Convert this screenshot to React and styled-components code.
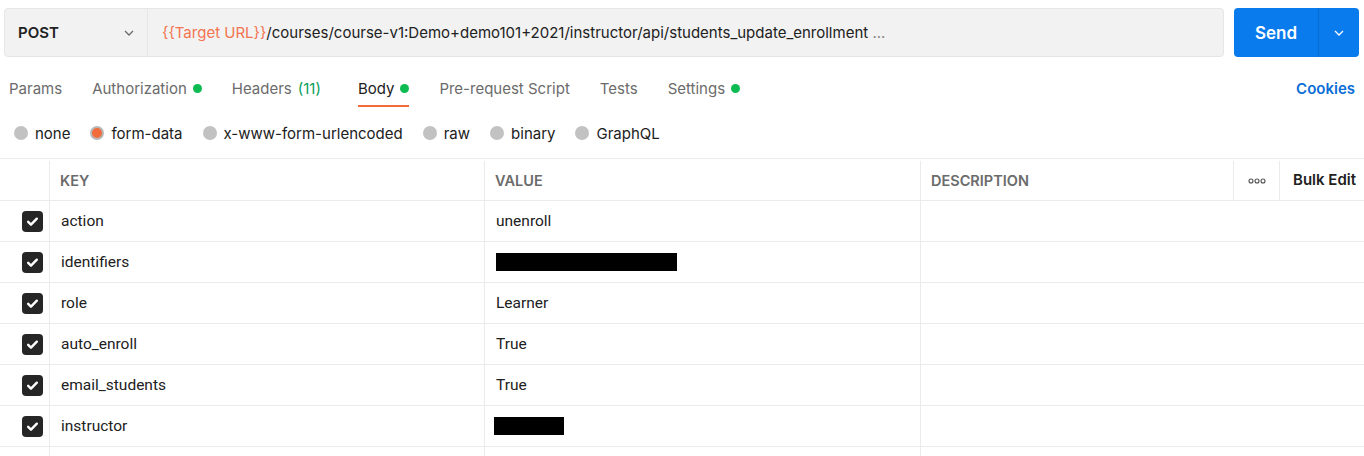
import styled, { createGlobalStyle } from "styled-components";

const GlobalStyle = createGlobalStyle`
  body {
    margin: 0;
    background: #ffffff;
    font-family: Inter, "Noto Sans", sans-serif;
    color: #212121;
    overflow: hidden;
  }
`;

const rows = [
  { key: "action", value: "unenroll" },
  { key: "identifiers", redact: 181 },
  { key: "role", value: "Learner" },
  { key: "auto_enroll", value: "True" },
  { key: "email_students", value: "True" },
  { key: "instructor", redact: 70, shift: -2 },
  { key: "", value: "" },
];

const tabs = [
  { label: "Params" },
  { label: "Authorization", dot: true },
  { label: "Headers", count: "(11)" },
  { label: "Body", dot: true, active: true },
  { label: "Pre-request Script" },
  { label: "Tests" },
  { label: "Settings", dot: true },
];

const bodyTypes = ["none", "form-data", "x-www-form-urlencoded", "raw", "binary", "GraphQL"];

function Chevron({ color = "#6b6b6b" }) {
  return (
    <svg width="12" height="12" viewBox="0 0 12 12" fill="none">
      <path d="M2 4l4 4 4-4" stroke={color} strokeWidth="1.3" />
    </svg>
  );
}

function Check() {
  return (
    <svg width="13" height="13" viewBox="0 0 12 12" fill="none">
      <path d="M2 6.3l2.6 2.6L10 3.4" stroke="#fff" strokeWidth="2.2" strokeLinecap="round" strokeLinejoin="round" />
    </svg>
  );
}

function Dots() {
  return (
    <svg width="18" height="6" viewBox="0 0 18 6" fill="none">
      <circle cx="3" cy="3" r="2" stroke="#505050" strokeWidth="1.1" />
      <circle cx="9" cy="3" r="2" stroke="#505050" strokeWidth="1.1" />
      <circle cx="15" cy="3" r="2" stroke="#505050" strokeWidth="1.1" />
    </svg>
  );
}

export default function App() {
  return (
    <Page>
      <GlobalStyle />
      <RequestBar>
        <UrlGroup>
          <Method>
            POST
            <Chevron />
          </Method>
          <Url>
            <Variable>{"{{Target URL}}"}</Variable>
            /courses/course-v1:Demo+demo101+2021/instructor/api/students_update_enrollment
            <Muted> ...</Muted>
          </Url>
        </UrlGroup>
        <SendButton>
          <SendLabel>Send</SendLabel>
          <SendMenu>
            <Chevron color="#ffffff" />
          </SendMenu>
        </SendButton>
      </RequestBar>

      <TabBar>
        <Tabs>
          {tabs.map((t) => (
            <Tab key={t.label} $active={t.active}>
              {t.label}
              {t.count && <Count>{t.count}</Count>}
              {t.dot && <Dot />}
            </Tab>
          ))}
        </Tabs>
        <Cookies>Cookies</Cookies>
      </TabBar>

      <RadioRow>
        {bodyTypes.map((b) => (
          <RadioItem key={b}>
            <Radio $on={b === "form-data"} />
            {b}
          </RadioItem>
        ))}
      </RadioRow>

      <Table>
        <HeadRow>
          <HeadCell $w="50px" />
          <HeadCell $w="435px">KEY</HeadCell>
          <HeadCell $w="436px">VALUE</HeadCell>
          <HeadCell $w="313px">DESCRIPTION</HeadCell>
          <HeadCell $w="46px" $center>
            <Dots />
          </HeadCell>
          <BulkEdit>Bulk Edit</BulkEdit>
        </HeadRow>
        {rows.map((r, i) => (
          <Row key={i}>
            <CheckCell>
              {r.key && (
                <Checkbox>
                  <Check />
                </Checkbox>
              )}
            </CheckCell>
            <Cell $w="435px">{r.key}</Cell>
            <Cell $w="436px">
              {r.redact ? <Redacted style={{ width: r.redact, marginLeft: r.shift || 0 }} /> : r.value}
            </Cell>
            <Cell $w="auto" $last />
          </Row>
        ))}
      </Table>
    </Page>
  );
}

const Page = styled.div`
  width: 1364px;
  height: 456px;
  overflow: hidden;
`;

const RequestBar = styled.div`
  display: flex;
  gap: 10px;
  padding: 8px 5px 0 4px;
  height: 49px;
`;

const UrlGroup = styled.div`
  flex: 1;
  display: flex;
  background: #f2f2f2;
  border: 1px solid #e6e6e6;
  border-radius: 4px;
  box-sizing: border-box;
`;

const Method = styled.div`
  width: 143px;
  box-sizing: border-box;
  padding: 0 12px 0 13px;
  display: flex;
  align-items: center;
  justify-content: space-between;
  border-right: 1px solid #e6e6e6;
  font-weight: 600;
  font-size: 15px;
  color: #212121;
`;

const Url = styled.div`
  display: flex;
  align-items: center;
  padding-left: 14px;
  font-size: 15px;
  color: #212121;
  white-space: pre;
`;

const Variable = styled.span`
  color: #f47450;
`;

const Muted = styled.span`
  color: #8a8a8a;
`;

const SendButton = styled.div`
  width: 125px;
  display: flex;
  background: #097bed;
  border-radius: 4px;
  color: #ffffff;
`;

const SendLabel = styled.div`
  width: 84px;
  display: flex;
  align-items: center;
  justify-content: center;
  font-weight: 600;
  font-size: 17px;
  border-right: 1px solid #0a6bd0;
`;

const SendMenu = styled.div`
  flex: 1;
  display: flex;
  align-items: center;
  justify-content: center;
`;

const TabBar = styled.div`
  display: flex;
  justify-content: space-between;
  align-items: stretch;
  height: 50px;
  padding: 0 9px 0 9px;
`;

const Tabs = styled.div`
  display: flex;
  gap: 30px;
`;

const Tab = styled.div`
  display: flex;
  align-items: center;
  gap: 6px;
  font-size: 15px;
  padding-top: 15px;
  color: ${({ $active }) => ($active ? "#212121" : "#6b6b6b")};
  border-bottom: 2px solid ${({ $active }) => ($active ? "#f26b3a" : "transparent")};
  box-sizing: border-box;
  height: 50px;
`;

const Count = styled.span`
  color: #0a9d5a;
  margin-right: 7px;
`;

const Dot = styled.span`
  width: 9px;
  height: 9px;
  border-radius: 50%;
  background: #0cbb52;
`;

const Cookies = styled.div`
  display: flex;
  align-items: center;
  padding-top: 12px;
  font-size: 15px;
  font-weight: 600;
  color: #0b6ed6;
`;

const RadioRow = styled.div`
  display: flex;
  align-items: center;
  gap: 20px;
  height: 51px;
  padding: 1px 0 0 14px;
  box-sizing: border-box;
`;

const RadioItem = styled.div`
  display: flex;
  align-items: center;
  gap: 7px;
  font-size: 15px;
  color: #212121;
`;

const Radio = styled.span`
  width: 14px;
  height: 14px;
  box-sizing: border-box;
  border-radius: 50%;
  background: ${({ $on }) => ($on ? "#f26b3a" : "#c2c2c2")};
  border: ${({ $on }) => ($on ? "2px solid #b8b8b8" : "none")};
`;

const Table = styled.div`
  border-top: 1px solid #ebebeb;
`;

const HeadRow = styled.div`
  display: flex;
  height: 42px;
  border-bottom: 1px solid #ebebeb;
  box-sizing: border-box;
`;

const HeadCell = styled.div`
  width: ${({ $w }) => $w};
  flex-shrink: 0;
  box-sizing: border-box;
  border-right: 1px solid #ebebeb;
  margin-top: 2px;
  display: flex;
  align-items: center;
  justify-content: ${({ $center }) => ($center ? "center" : "flex-start")};
  padding-left: ${({ $center }) => ($center ? "0" : "10px")};
  font-size: 14.5px;
  font-weight: 600;
  color: #6b6b6b;
`;

const BulkEdit = styled.div`
  flex: 1;
  display: flex;
  align-items: center;
  padding-left: 13px;
  font-size: 15px;
  font-weight: 600;
  color: #212121;
`;

const Row = styled.div`
  display: flex;
  height: 41px;
  border-bottom: 1px solid #ebebeb;
  box-sizing: border-box;
`;

const CheckCell = styled.div`
  width: 50px;
  flex-shrink: 0;
  box-sizing: border-box;
  border-right: 1px solid #ebebeb;
  display: flex;
  align-items: center;
  justify-content: flex-end;
  padding-right: 6px;
`;

const Checkbox = styled.span`
  width: 21px;
  height: 21px;
  border-radius: 4px;
  background: #262626;
  display: flex;
  align-items: center;
  justify-content: center;
`;

const Cell = styled.div`
  width: ${({ $w }) => $w};
  flex: ${({ $last }) => ($last ? 1 : "none")};
  box-sizing: border-box;
  border-right: ${({ $last }) => ($last ? "none" : "1px solid #ebebeb")};
  display: flex;
  align-items: center;
  padding-left: 11px;
  font-family: Roboto, Inter, sans-serif;
  font-size: 15.5px;
  color: #212121;
`;

const Redacted = styled.span`
  display: block;
  height: 18px;
  background: #000000;
`;
